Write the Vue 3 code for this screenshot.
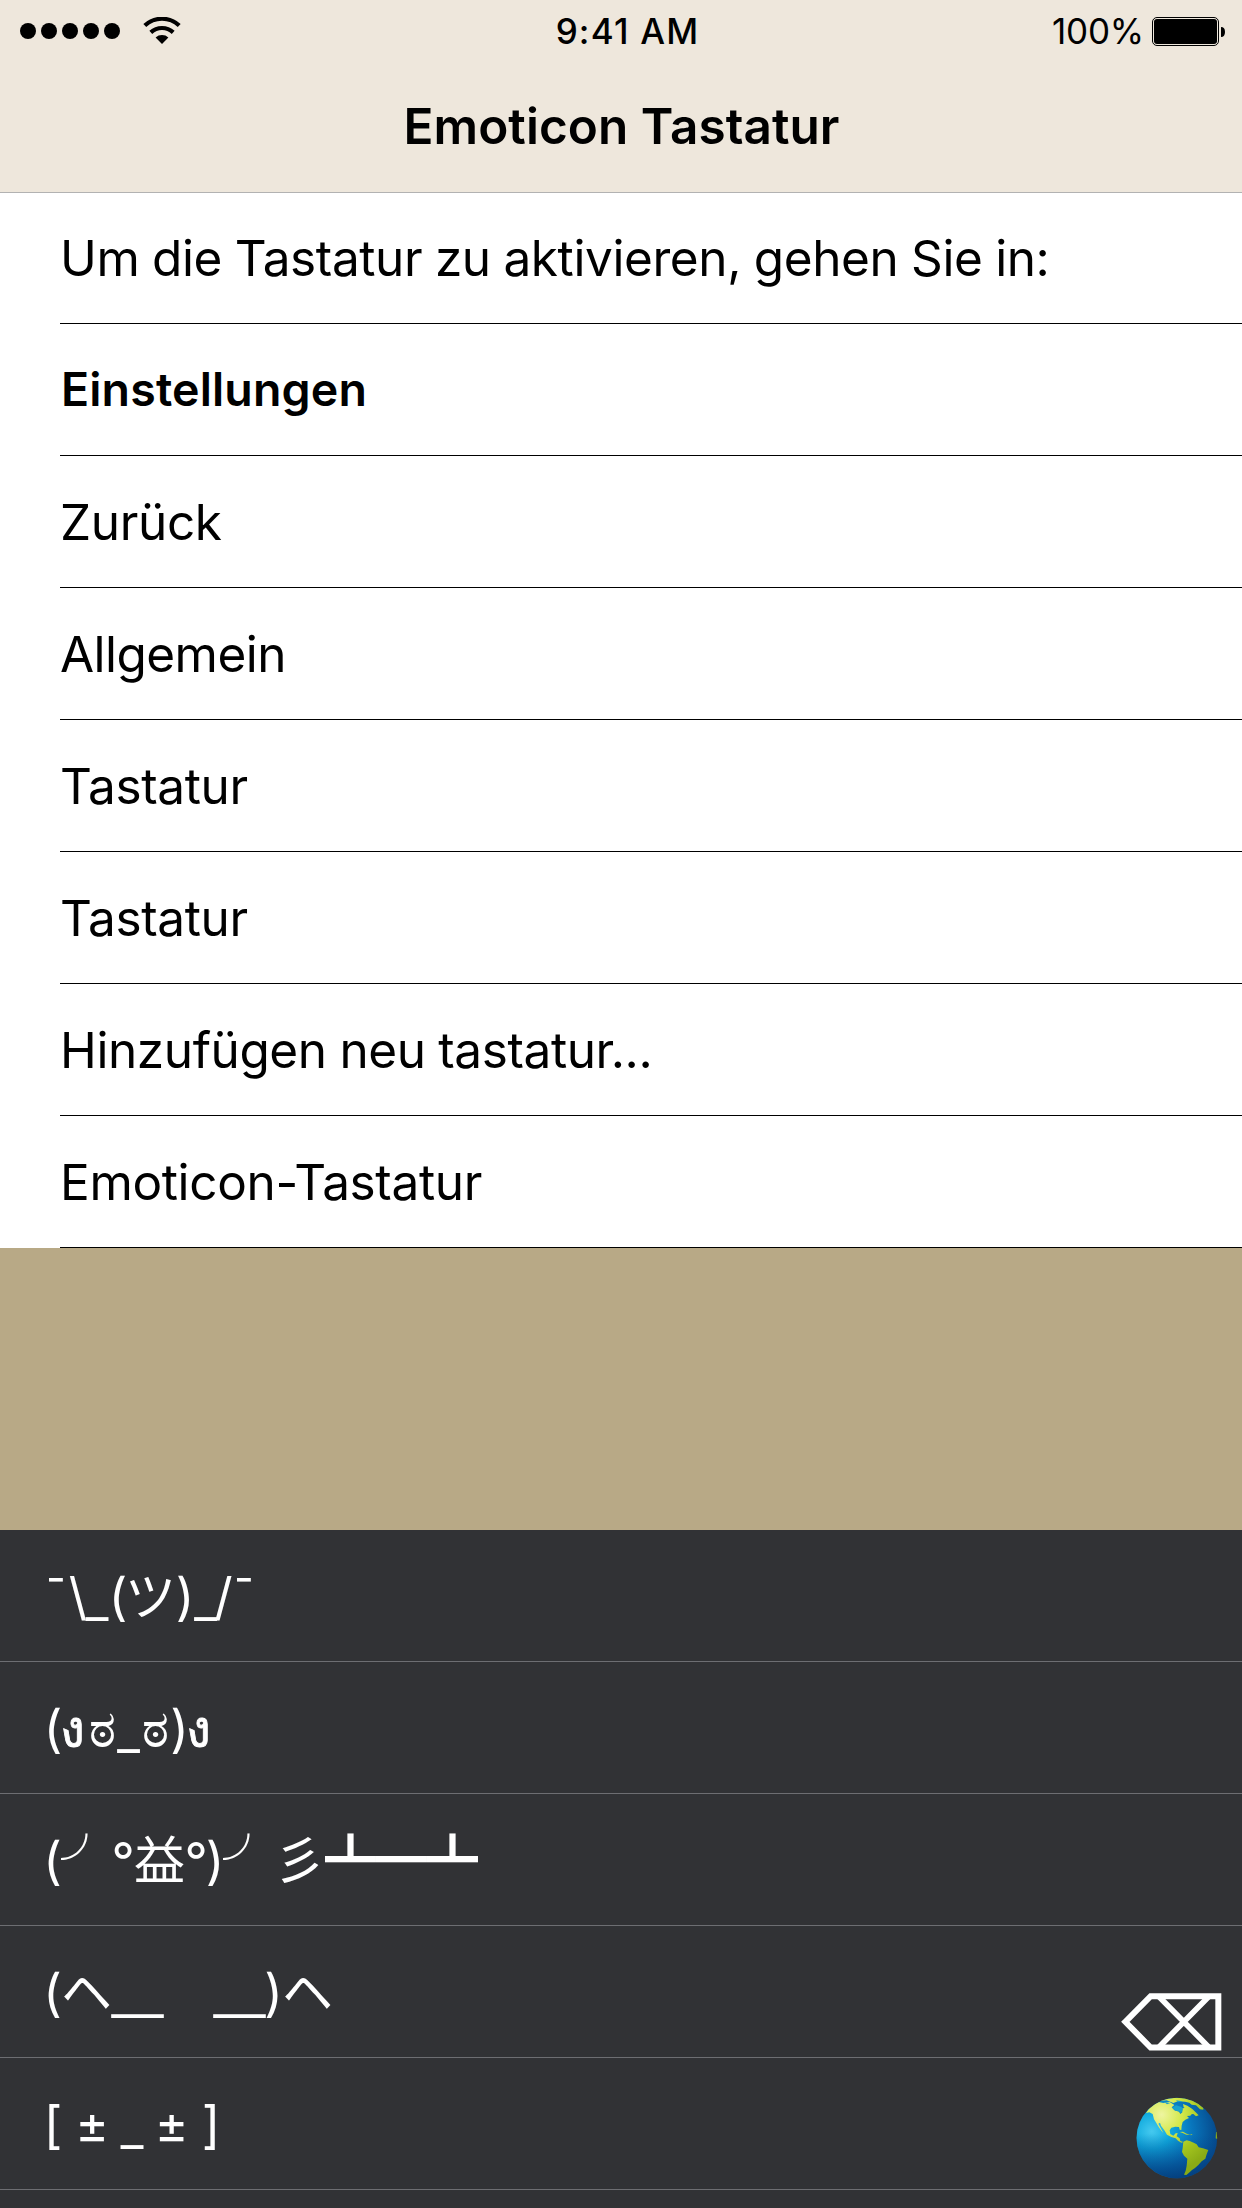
<script setup>
const steps = [
  { text: 'Um die Tastatur zu aktivieren, gehen Sie in:', kind: 'intro' },
  { text: 'Einstellungen', kind: 'strong' },
  { text: 'Zurück', kind: '' },
  { text: 'Allgemein', kind: 'tight' },
  { text: 'Tastatur', kind: '' },
  { text: 'Tastatur', kind: '' },
  { text: 'Hinzufügen neu tastatur...', kind: 'intro' },
  { text: 'Emoticon-Tastatur', kind: '' },
]

// Each emoticon is a run of [glyph, advance] pairs.
const emoticons = [
  [['¯', 24], ['\\', 20], ['_', 18], ['(', 24], ['ツ', 41], [')', 28], ['_', 13], ['/', 23], ['¯', 18]],
  [['(', 18], ['ง', 20], ['ಠ', 40], ['_', 13], ['ಠ', 40], [')', 9], ['ง', 28]],
  [['(', 17], ['╯', 51], ['°', 22], ['益', 51], ['°', 22], [')', 16], ['╯', 51], ['彡', 51], ['┻', 51], ['━', 51], ['┻', 51]],
  [['(', 17], ['ヘ', 51], ['＿', 51], ['　', 51], ['＿', 51], [')', 17], ['ヘ', 51]],
  [['[', 18], ['±', 60], ['_', 20], ['±', 59], [']', 20]],
]

const variants = { '_': 'low', '＿': 'wide', 'ง': 'thai' }
</script>

<template>
  <div class="screen">
    <header class="header">
      <div class="status">
        <div class="signal">
          <i v-for="n in 5" :key="n" class="dot"></i>
          <svg class="wifi" viewBox="0 0 38 28" width="38" height="28">
            <path d="M1.800 8.600A25 25 0 0 1 36.200 8.600" fill="none" stroke="#000" stroke-width="4.200" />
            <path d="M7.800 15.400A16.500 16.500 0 0 1 30.200 15.400" fill="none" stroke="#000" stroke-width="4.200" />
            <path d="M12.600 20.600A9.500 9.500 0 0 1 25.400 20.600L19 27Z" />
          </svg>
        </div>
        <div class="time">9:41 AM</div>
        <div class="power">
          <span class="percent">100%</span>
          <svg class="battery" viewBox="0 0 74 29" width="74" height="29">
            <rect x=".5" y=".5" width="66" height="28" rx="4.500" fill="none" stroke="#000" />
            <rect x="2" y="2" width="63" height="25" rx="3" />
            <path d="M69 10q4 0 4 5t-4 5z" />
          </svg>
        </div>
      </div>
      <h1 class="title">Emoticon Tastatur</h1>
    </header>

    <ul class="steps">
      <li v-for="(step, i) in steps" :key="i" class="step">
        <span :class="step.kind">{{ step.text }}</span>
      </li>
    </ul>

    <section class="keyboard">
      <div v-for="(face, i) in emoticons" :key="i" class="face">
        <span
          v-for="(g, j) in face"
          :key="j"
          class="glyph"
          :class="variants[g[0]]"
          :style="{ width: g[1] + 'px' }"
        >{{ g[0] }}</span>
      </div>
      <div class="keys">
        <svg class="backspace" viewBox="63 71 304 174" width="101.33" height="58">
          <path d="M76 157.500L152 80.500H355V234.500H152Z" fill="none" stroke="#fff" stroke-width="18" />
          <path d="M178 83L325 232M325 83L178 232" stroke="#fff" stroke-width="17" />
        </svg>
        <svg class="globe" viewBox="78 82 246 246" width="82" height="82">
          <defs>
            <radialGradient id="sea" gradientUnits="userSpaceOnUse" cx="125" cy="185" r="195">
              <stop offset="0" stop-color="#45c9ef" />
              <stop offset=".28" stop-color="#10aade" />
              <stop offset=".62" stop-color="#0876bd" />
              <stop offset="1" stop-color="#064a8c" />
            </radialGradient>
            <radialGradient id="land" gradientUnits="userSpaceOnUse" cx="155" cy="135" r="175">
              <stop offset="0" stop-color="#eef5a0" />
              <stop offset=".35" stop-color="#d3e84a" />
              <stop offset=".7" stop-color="#a3c51f" />
              <stop offset="1" stop-color="#8aab16" />
            </radialGradient>
            <linearGradient id="shade" x1="0" y1="0" x2="0" y2="1">
              <stop offset=".45" stop-color="#034a94" stop-opacity="0" />
              <stop offset="1" stop-color="#033a78" stop-opacity=".85" />
            </linearGradient>
            <clipPath id="disc"><circle cx="200.500" cy="205" r="121" /></clipPath>
          </defs>
          <g clip-path="url(#disc)">
            <rect x="78" y="82" width="246" height="246" fill="url(#sea)" />
            <rect x="78" y="82" width="246" height="246" fill="url(#shade)" />
            <g fill="url(#land)">
              <path d="M108 130L122 110 146 97 160 100 178 96 193 106 185 113 193 122 207 126 211 133 217 128 216 117 228 113 240 125 247 131 241 138 231 139 237 145 226 150 218 157 215 168 214 181 209 180 207 172 196 171 184 174 179 182 181 193 190 198 197 191 203 190 200 200 209 206 211 214 220 217 214 219 204 213 197 206 184 202 171 195 164 183 153 168 150 159 145 162 154 179 160 190 154 183 146 172 139 160 132 149 128 133 118 128Z" />
              <path d="M220 216L230 212 239 214 251 219 260 224 266 233 279 236 295 241 290 254 286 267 275 275 265 286 255 295 246 301 237 309 229 316 222 315 227 303 230 288 232 267 222 258 216 247 218 235Z" />
              <path d="M146 94L168 87 200 84 226 86 246 92 262 99 280 114 280 120 270 119 258 107 245 105 238 99 225 96 204 95 190 100 170 92Z" />
              <path d="M219 103L232 108 247 118 257 128 266 137 258 140 250 133 240 134 234 121 221 113Z" />
              <path d="M209 187L219 186 230 192 241 195 229 195 218 190ZM242 193L248 195 242 197ZM318 187L323 187 323 209 317 206Z" />
            </g>
            <path d="M187 114L198 107 215 112 219 120 213 130 206 124 196 123ZM163 97L181 100 171 104ZM198 92L218 95 205 98Z" fill="#18a2ce" />
          </g>
        </svg>
      </div>
    </section>
  </div>
</template>

<style>
body {
  margin: 0;
}
</style>

<style scoped>
.screen {
  display: flex;
  flex-direction: column;
  width: 1242px;
  height: 2208px;
  overflow: hidden;
  background: #b8a986;
  color: #000;
  font-family: Inter, "Noto Sans CJK JP", "Noto Sans", sans-serif;
  font-size: 49.5px;
}
.header {
  position: relative;
  height: 192px;
  flex: none;
  background: #eee7dc;
  box-shadow: 0 1px #b2b2b2;
}
.status {
  display: grid;
  grid-template-columns: 1fr auto 1fr;
  height: 60px;
  padding: 0 16px 0 20px;
  font-size: 35px;
  line-height: 62px;
}
.signal {
  display: flex;
  align-items: center;
  gap: 5px;
}
.dot {
  width: 16px;
  height: 16px;
  border-radius: 50%;
  background: #000;
}
.wifi {
  margin-left: 18px;
}
.time {
  margin-left: 9px;
  font-weight: 500;
  letter-spacing: 1.2px;
}
.power {
  display: flex;
  justify-content: flex-end;
  align-items: center;
  gap: 8px;
}
.percent {
  letter-spacing: -0.2px;
}
.title {
  margin: 0;
  padding-left: 1px;
  font-size: 49.5px;
  font-weight: 600;
  letter-spacing: 0.05px;
  line-height: 132px;
  text-align: center;
}
.steps {
  list-style: none;
  margin: 0;
  padding: 0 0 0 60px;
  background: #fff;
}
.step {
  box-sizing: border-box;
  height: 132px;
  border-bottom: 1px solid #000;
  line-height: 132px;
  letter-spacing: -0.35px;
  white-space: nowrap;
}
.intro {
  letter-spacing: -0.4px;
  word-spacing: -0.8px;
}
.tight {
  letter-spacing: -0.55px;
}
.strong {
  display: block;
  padding-left: 1px;
  font-size: 46.5px;
  font-weight: 600;
  letter-spacing: 0.15px;
  line-height: 131px;
}
.keyboard {
  position: relative;
  height: 678px;
  margin-top: 282px;
  background: #313235;
  color: #fff;
}
.face {
  display: flex;
  box-sizing: border-box;
  height: 132px;
  padding-left: 44px;
  border-bottom: 1px solid #6d6e72;
  line-height: 133px;
  font-size: 51px;
}
.glyph {
  display: flex;
  justify-content: center;
  white-space: pre;
}
.low {
  padding-top: 3px;
  font-family: Roboto, sans-serif;
}
.wide {
  -webkit-text-stroke: 1.6px #fff;
}
.thai {
  -webkit-text-stroke: 0.8px #fff;
}
.keys {
  position: absolute;
  right: 20px;
  bottom: 29px;
  display: flex;
  flex-direction: column;
  align-items: flex-end;
  gap: 46px;
}
.globe {
  margin-right: 4px;
}
</style>
